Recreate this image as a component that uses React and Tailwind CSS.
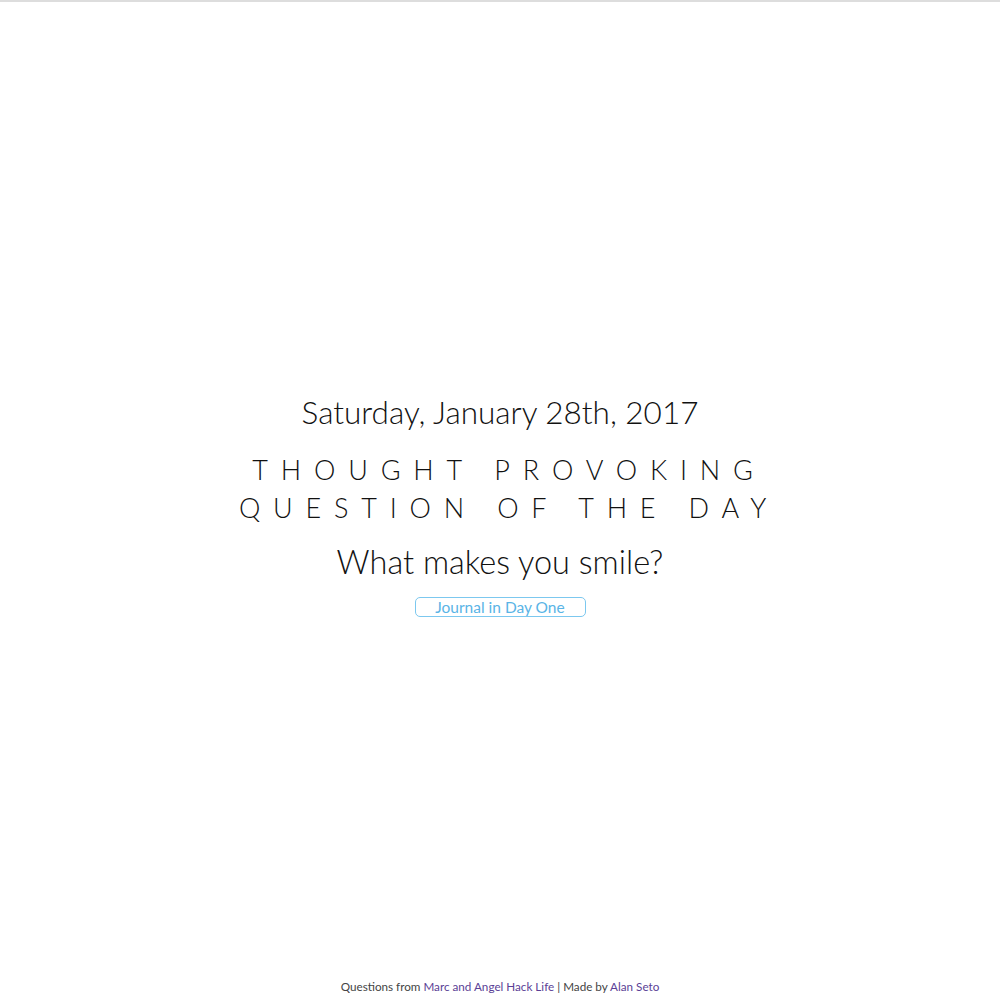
export default function App() {
  return (
    <div
      className="flex min-h-[1001px] flex-col border-t-2 border-[#dddddd] bg-white text-[#111]"
      style={{ fontFamily: "Lato, 'Noto Sans', sans-serif" }}
    >
      <main className="flex flex-1 flex-col items-center justify-center pt-[28px] text-center">
        <h2 className="text-[31.5px] font-light leading-[40px]">Saturday, January 28th, 2017</h2>
        <h1 className="mt-[19px] pl-[18px] text-[27px] font-light uppercase leading-[38px] tracking-[0.475em]">
          Thought Provoking
          <br />
          Question of the Day
        </h1>
        <p className="mt-[15px] text-[32.5px] font-light leading-[40px]">What makes you smile?</p>
        <a className="mt-[15px] block w-[171px] rounded-[5px] border border-[#7cc8ef] text-[15.5px] leading-[18px] text-[#5ab4e6]">
          Journal in Day One
        </a>
      </main>
      <footer className="pb-[8px] text-center text-[11.7px] leading-[14px] text-[#444]">
        Questions from <a className="text-[#5b3f96]">Marc and Angel Hack Life</a> | Made by{" "}
        <a className="text-[#5b3f96]">Alan Seto</a>
      </footer>
    </div>
  );
}
